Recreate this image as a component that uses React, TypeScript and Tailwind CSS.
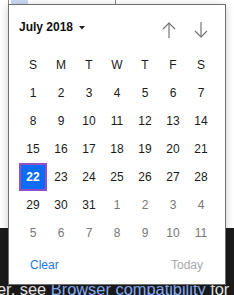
import React from "react";

const weeks: { d: number; muted?: boolean; sel?: boolean }[][] = [
  [1, 2, 3, 4, 5, 6, 7].map((d) => ({ d })),
  [8, 9, 10, 11, 12, 13, 14].map((d) => ({ d })),
  [15, 16, 17, 18, 19, 20, 21].map((d) => ({ d })),
  [22, 23, 24, 25, 26, 27, 28].map((d) => ({ d, sel: d === 22 })),
  [
    { d: 29 },
    { d: 30 },
    { d: 31 },
    { d: 1, muted: true },
    { d: 2, muted: true },
    { d: 3, muted: true },
    { d: 4, muted: true },
  ],
  [5, 6, 7, 8, 9, 10, 11].map((d) => ({ d, muted: true })),
];

const heads = ["S", "M", "T", "W", "T", "F", "S"];

export default function App() {
  return (
    <div className="relative w-[234px] h-[295px] overflow-hidden font-['Liberation_Sans',Arial,sans-serif]">
      <div className="h-[228px] bg-white">
        <div className="ml-[8px] w-[108px] h-[5px] border-x border-b border-[#8a8a8a] flex">
          <div className="ml-[2px] w-[17px] h-full bg-[#c9d9f1]" />
        </div>
      </div>
      <div className="h-[67px] bg-[#1b1b1b] pt-[49px]">
        <div className="ml-[-3px] whitespace-nowrap text-[16.4px] leading-[24px] text-[#ececec]">
          er, see{" "}
          <span className="text-[#8cb4ff] underline">Browser compatibility</span> for
        </div>
      </div>

      <div className="absolute left-[8px] top-[4px] w-[218px] h-[281px] bg-white border border-[#6f6f6f] shadow-[0_2px_8px_rgba(0,0,0,0.22)] flex flex-col">
        <div className="h-[46px] flex items-center justify-between pl-[10px] pr-[17px]">
          <div className="flex items-center pb-[2px]">
            <span className="text-[12px] font-bold text-[#111]">July 2018</span>
            <svg width="6" height="4" viewBox="0 0 6 4" className="ml-[6px] mt-[1px]">
              <path d="M0 0 L6 0 L3 3.5 Z" fill="#222" />
            </svg>
          </div>
          <div className="flex items-center gap-[18px] mt-[4px]">
            <svg width="14" height="16" viewBox="0 0 14 16" fill="none" stroke="#757575" strokeWidth="1.2">
              <path d="M7 0.8 V16" />
              <path d="M1 7 L7 1 L13 7" />
            </svg>
            <svg width="14" height="16" viewBox="0 0 14 16" fill="none" stroke="#757575" strokeWidth="1.2">
              <path d="M7 0 V15.2" />
              <path d="M1 9 L7 15 L13 9" />
            </svg>
          </div>
        </div>

        <div className="pl-[10px] grid grid-cols-[repeat(7,28px)] auto-rows-[28px] text-[12px]">
          {heads.map((h, i) => (
            <div key={i} className="flex items-center justify-center text-[#1a1a1a]">
              {h}
            </div>
          ))}
          {weeks.flat().map((c, i) =>
            c.sel ? (
              <div key={i} className="flex items-center justify-center">
                <div className="w-[28px] h-[28px] border-2 border-[#9250c8] bg-[#0a6cf7] text-white font-bold flex items-center justify-center">
                  {c.d}
                </div>
              </div>
            ) : (
              <div
                key={i}
                className={
                  "flex items-center justify-center " +
                  (c.muted ? "text-[#767676]" : "text-[#1a1a1a]")
                }
              >
                {c.d}
              </div>
            )
          )}
        </div>

        <div className="h-[35px] flex items-center justify-between pl-[21px] pr-[22px] text-[12px]">
          <span className="text-[#1f78d8]">Clear</span>
          <span className="text-[#a9a9a9]">Today</span>
        </div>
      </div>
    </div>
  );
}
